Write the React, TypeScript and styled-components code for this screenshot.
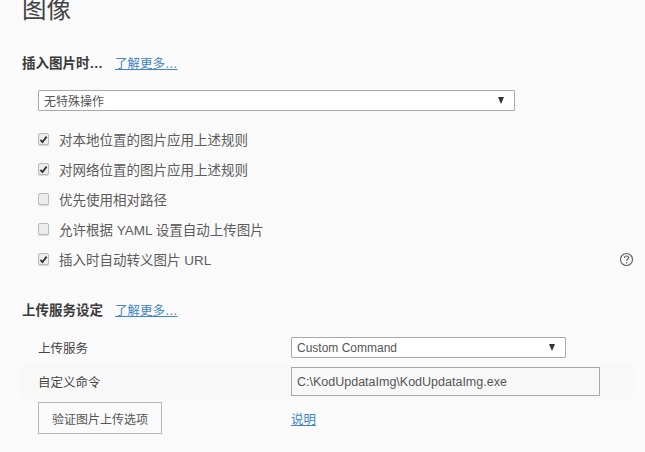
import React from "react";
import styled, { createGlobalStyle } from "styled-components";

const GlobalStyle = createGlobalStyle`
  html, body {
    margin: 0;
    padding: 0;
    height: 100%;
    overflow: hidden;
    background: #fafafa;
  }
`;

const Page = styled.div`
  width: 645px;
  height: 452px;
  overflow: hidden;
  box-sizing: border-box;
  padding: 0 11px 0 21px;
  background: #fafafa;
  color: #444;
  font-family: "Liberation Sans", "Noto Sans CJK SC", sans-serif;
  font-size: 13.5px;
`;

const Title = styled.h1`
  margin: 0 0 0 1px;
  height: 20px;
  line-height: 20px;
  font-size: 24.5px;
  font-weight: 400;
  color: #444;
`;

const SectionHead = styled.div<{ $top: number }>`
  display: flex;
  align-items: center;
  height: 20px;
  margin: ${(p) => p.$top}px 0 0 1px;
  gap: 12px;
`;

const HeadText = styled.span`
  font-weight: 700;
  color: #3a3a3a;
`;

const Link = styled.a`
  color: #4183c4;
  text-decoration: underline;
  font-size: 12.5px;
  cursor: pointer;
`;

const SelectBox = styled.div<{ $width: number }>`
  display: flex;
  align-items: center;
  justify-content: space-between;
  box-sizing: border-box;
  width: ${(p) => p.$width}px;
  height: 21px;
  padding: 0 10px 0 5px;
  background: #fff;
  border: 1px solid #a9a9a9;
  border-radius: 1px;
  font-size: 12px;
  color: #555;
`;

const Arrow = styled.span`
  width: 0;
  height: 0;
  border-left: 3.5px solid transparent;
  border-right: 3.5px solid transparent;
  border-top: 7px solid #333;
`;

const TopSelect = styled.div`
  margin: 18px 0 0 17px;
`;

const Options = styled.div`
  display: flex;
  flex-direction: column;
  margin: 13px 0 0 17px;
`;

const OptionRow = styled.label`
  display: flex;
  align-items: center;
  height: 30px;
  gap: 10px;
  color: #5c5c5c;
`;

const OptionText = styled.span`
  flex: 1;
`;

const Box = styled.span`
  display: flex;
  align-items: center;
  justify-content: center;
  box-sizing: border-box;
  width: 11px;
  height: 12px;
  background: #ececec;
  border: 1px solid #bbb;
  border-radius: 2px;
  box-shadow: 0 1px 1px rgba(0, 0, 0, 0.15);
`;

const HelpIcon = styled.svg`
  width: 15px;
  height: 15px;
  color: #666;
`;

const FormRow = styled.div<{ $shaded?: boolean }>`
  display: grid;
  grid-template-columns: 253px 1fr;
  align-items: center;
  padding-left: 17px;
  font-size: 12.5px;
  background: ${(p) => (p.$shaded ? "#f8f8f8" : "transparent")};
`;

const ServiceRow = styled(FormRow)`
  height: 21px;
  margin-top: 18px;
`;

const CommandRow = styled(FormRow)`
  height: 33px;
  margin-top: 7px;
`;

const ActionRow = styled(FormRow)`
  margin-top: 4px;
  height: 32px;
`;

const FieldLabel = styled.span`
  color: #444;
`;

const CommandInput = styled.input`
  box-sizing: border-box;
  width: 309px;
  height: 29px;
  padding: 0 5px;
  background: transparent;
  border: 1px solid #a9a9a9;
  border-radius: 0;
  outline: none;
  font-family: inherit;
  font-size: 12.5px;
  color: #555;
`;

const VerifyButton = styled.button`
  box-sizing: border-box;
  width: 124px;
  height: 32px;
  padding: 0;
  background: transparent;
  border: 1px solid #b5b5b5;
  font-family: inherit;
  font-size: 12px;
  color: #555;
`;

const options = [
  { text: "对本地位置的图片应用上述规则", checked: true },
  { text: "对网络位置的图片应用上述规则", checked: true },
  { text: "优先使用相对路径", checked: false },
  { text: "允许根据 YAML 设置自动上传图片", checked: false },
  { text: "插入时自动转义图片 URL", checked: true, help: true },
];

const App = () => (
  <Page>
    <GlobalStyle />
    <Title>图像</Title>

    <SectionHead $top={32}>
      <HeadText>插入图片时…</HeadText>
      <Link>了解更多…</Link>
    </SectionHead>

    <TopSelect>
      <SelectBox $width={477}>
        <span>无特殊操作</span>
        <Arrow />
      </SelectBox>
    </TopSelect>

    <Options>
      {options.map((o) => (
        <OptionRow key={o.text}>
          <Box>
            {o.checked && (
              <svg width="9" height="9" viewBox="0 0 9 9">
                <path d="M1.4 4.8 L3.5 7 L7.6 1.6" fill="none" stroke="#333" strokeWidth="1.8" />
              </svg>
            )}
          </Box>
          <OptionText>{o.text}</OptionText>
          {o.help && (
            <HelpIcon viewBox="0 0 15 15">
              <circle cx="7.5" cy="7.5" r="6" fill="none" stroke="currentColor" strokeWidth="1.2" />
              <path
                d="M5.5 6 C5.5 4.6 6.4 4 7.5 4 C8.7 4 9.5 4.8 9.5 5.7 C9.5 7 7.6 7.2 7.6 8.9"
                fill="none"
                stroke="currentColor"
                strokeWidth="1.2"
              />
              <circle cx="7.6" cy="10.7" r="0.8" fill="currentColor" />
            </HelpIcon>
          )}
        </OptionRow>
      ))}
    </Options>

    <SectionHead $top={25}>
      <HeadText>上传服务设定</HeadText>
      <Link>了解更多…</Link>
    </SectionHead>

    <ServiceRow>
      <FieldLabel>上传服务</FieldLabel>
      <SelectBox $width={275}>
        <span>Custom Command</span>
        <Arrow />
      </SelectBox>
    </ServiceRow>

    <CommandRow $shaded>
      <FieldLabel>自定义命令</FieldLabel>
      <CommandInput readOnly value="C:\KodUpdataImg\KodUpdataImg.exe" />
    </CommandRow>

    <ActionRow>
      <VerifyButton>验证图片上传选项</VerifyButton>
      <div>
        <Link>说明</Link>
      </div>
    </ActionRow>
  </Page>
);

export default App;
